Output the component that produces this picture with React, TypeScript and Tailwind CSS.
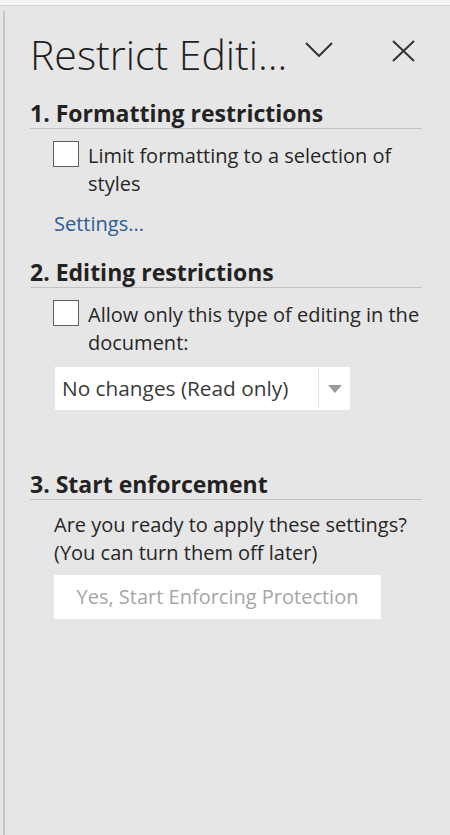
import React from "react";

function Checkbox() {
  return <span className="-mt-[1px] h-[26px] w-[26px] shrink-0 border-[1.5px] border-[#5e5e5e] bg-white" />;
}

function SectionHeader({ children }: { children: React.ReactNode }) {
  return (
    <h2 className="border-b border-[#c2c2c2] pb-[1px] text-[23px] font-bold leading-[28px] text-[#222]">
      {children}
    </h2>
  );
}

export default function App() {
  return (
    <div className="min-h-[835px] w-[450px] bg-[#f4f4f4] pt-[5px] font-['Open_Sans','Noto_Sans',sans-serif] text-[#262626]">
      <div className="flex min-h-[830px] border-t border-[#d2d2d2] bg-[#e6e6e6]">
        <div className="ml-[3px] mt-[5px] w-[2px] shrink-0 bg-[#c6c6c6]" />
        <div className="flex-1 pl-[25px] pr-[28px]">
          <div className="flex items-start pt-[23px]">
            <h1 className="flex-1 whitespace-nowrap text-[41px] font-light leading-[50px] text-[#1e1e1e]">Restrict Editi...</h1>
            <svg className="mt-[13px] shrink-0 text-[#333]" width="28" height="15" viewBox="0 0 28 15" fill="none" stroke="currentColor" strokeWidth="2">
              <path d="M1 1 L14 14 L27 1" />
            </svg>
            <svg className="ml-[59px] mr-[7px] mt-[11px] shrink-0 text-[#333]" width="23" height="22" viewBox="0 0 23 22" fill="none" stroke="currentColor" strokeWidth="2">
              <path d="M1 1 L22 21 M22 1 L1 21" />
            </svg>
          </div>

          <section className="mt-[20px]">
            <SectionHeader>1. Formatting restrictions</SectionHeader>
            <label className="mt-[13px] flex gap-[9px] pl-[23px] text-[20px] leading-[28px]">
              <Checkbox />
              <span>Limit formatting to a selection of styles</span>
            </label>
            <a className="ml-[24px] mt-[12px] block text-[20px] leading-[28px] text-[#2e5c95]">Settings...</a>
          </section>

          <section className="mt-[20px]">
            <SectionHeader>2. Editing restrictions</SectionHeader>
            <label className="mt-[13px] flex gap-[9px] pl-[23px] text-[20px] leading-[28px]">
              <Checkbox />
              <span>Allow only this type of editing in the document:</span>
            </label>
            <div className="ml-[25px] mt-[10px] flex h-[43px] w-[295px] items-stretch bg-white">
              <span className="flex flex-1 items-center whitespace-nowrap pl-[7px] text-[20.8px] text-[#3a3a3a]">No changes (Read only)</span>
              <span className="my-[2px] w-px bg-[#e2e2e2]" />
              <span className="flex w-[31px] items-center justify-center">
                <svg width="14" height="8" viewBox="0 0 14 8">
                  <path d="M0 0 H14 L7 8 Z" fill="#9a9a9a" />
                </svg>
              </span>
            </div>
          </section>

          <section className="mt-[60px]">
            <SectionHeader>3. Start enforcement</SectionHeader>
            <p className="ml-[24px] mt-[11px] text-[20px] leading-[28px]">
              Are you ready to apply these settings?
              <br />
              (You can turn them off later)
            </p>
            <button className="ml-[24px] mt-[8px] block h-[44px] w-[327px] bg-white text-[20px] text-[#a6a6a6]">
              Yes, Start Enforcing Protection
            </button>
          </section>
        </div>
      </div>
    </div>
  );
}
